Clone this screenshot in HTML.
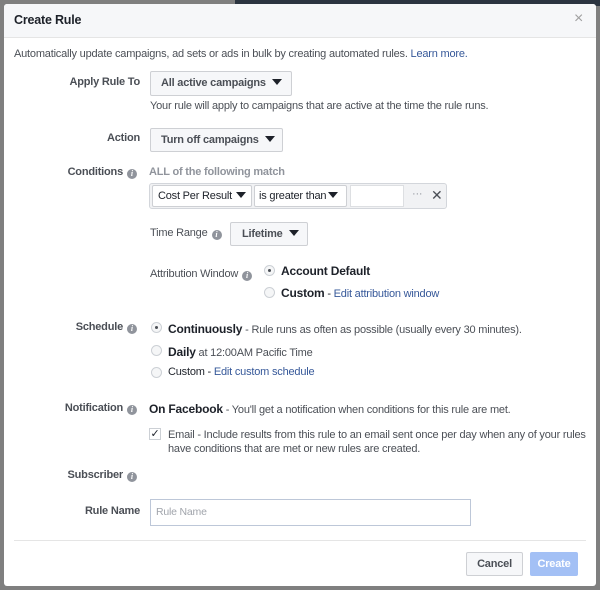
<!DOCTYPE html>
<html><head><style>
body{margin:0;width:600px;height:590px;position:relative;overflow:hidden;background:#7f7f7f;font-family:"Liberation Sans",Arial,sans-serif;font-size:11px;letter-spacing:-0.2px;color:#1d2129}
.a{position:absolute;white-space:nowrap}
.lbl{position:absolute;right:460px;color:#4b4f56;font-weight:bold;font-size:11px;white-space:nowrap}
.btn{position:absolute;white-space:nowrap;background:#f6f7f9;border:1px solid #ced0d4;border-radius:2px;box-sizing:border-box;font-weight:bold;color:#4b4f56;font-size:11px;line-height:22px;padding-left:10px}
.tri{display:inline-block;width:0;height:0;border-left:5px solid transparent;border-right:5px solid transparent;border-top:6px solid #1d2129;margin-left:6px;vertical-align:1px}
.i{display:inline-block;width:10px;height:10px;border-radius:50%;background:#90949c;color:#fff;font-size:8px;line-height:10px;text-align:center;font-weight:bold;font-style:italic;vertical-align:-1px;margin-left:4px;font-family:"Liberation Serif",serif;letter-spacing:0}
.rad{position:absolute;width:11px;height:11px;border-radius:50%;border:1px solid #ccd0d5;background:#f5f6f7;box-sizing:border-box}
.rad.on::after{content:"";position:absolute;left:3px;top:3px;width:3px;height:3px;border-radius:50%;background:#4b4f56}
.link{color:#365899}
.g{color:#4b4f56}
b{font-size:12px}
</style></head><body>
<div class="a" style="left:235px;top:0;width:365px;height:6px;background:#2b3440"></div>
<div class="a" style="left:4px;top:4px;width:592px;height:582px;background:#fff;border-radius:3px"></div>
<div class="a" style="left:4px;top:4px;width:592px;height:33px;background:#f6f7f9;border-bottom:1px solid #e5e5e5;border-radius:3px 3px 0 0"></div>
<div class="a" style="left:14px;top:13px;font-size:12.5px;font-weight:bold">Create Rule</div>
<div class="a" style="left:574px;top:10px;font-size:16px;color:#a0a0a0">×</div>
<div class="a" style="left:14px;top:48px;color:#4b4f56">Automatically update campaigns, ad sets or ads in bulk by creating automated rules. <span class="link">Learn more.</span></div>

<div class="lbl" style="top:76px">Apply Rule To</div>
<div class="btn" style="left:150px;top:71px;width:142px;height:25px">All active campaigns<span class="tri"></span></div>
<div class="a g" style="left:150px;top:100px">Your rule will apply to campaigns that are active at the time the rule runs.</div>

<div class="lbl" style="top:132px">Action</div>
<div class="btn" style="left:150px;top:128px;width:133px;height:24px">Turn off campaigns<span class="tri"></span></div>

<div class="lbl" style="top:166px;right:463px">Conditions<span class="i">i</span></div>
<div class="a" style="left:149px;top:166px;color:#90949c;font-weight:bold">ALL of the following match</div>
<div class="a" style="left:149px;top:183px;width:298px;height:26px;background:#f1f2f4;border:1px solid #d3d6db;border-radius:3px;box-sizing:border-box"></div>
<div class="btn" style="left:152px;top:185px;width:100px;height:22px;line-height:20px;padding-left:5px;background:#fff;font-weight:normal;color:#1d2129">Cost Per Result<span class="tri" style="margin-left:4px"></span></div>
<div class="btn" style="left:254px;top:185px;width:93px;height:22px;line-height:20px;padding-left:4px;background:#fff;font-weight:normal;color:#1d2129">is greater than<span class="tri" style="margin-left:2px"></span></div>
<div class="a" style="left:350px;top:185px;width:54px;height:22px;background:#fff;border:1px solid #dddfe2;box-sizing:border-box"></div>
<div class="a" style="left:412px;top:188px;color:#90949c">···</div>
<div class="a" style="left:431px;top:187px;font-size:14px;color:#4b4f56">✕</div>

<div class="a" style="left:150px;top:227px;color:#4b4f56">Time Range<span class="i">i</span></div>
<div class="btn" style="left:230px;top:222px;width:78px;height:24px;padding-left:11px">Lifetime<span class="tri"></span></div>

<div class="a" style="left:150px;top:268px;color:#4b4f56">Attribution Window<span class="i">i</span></div>
<div class="rad on" style="left:264px;top:265px"></div>
<div class="a" style="left:281px;top:264px"><b>Account Default</b></div>
<div class="rad" style="left:264px;top:287px"></div>
<div class="a" style="left:281px;top:286px"><b>Custom</b> - <span class="link">Edit attribution window</span></div>

<div class="lbl" style="top:321px;right:463px">Schedule<span class="i">i</span></div>
<div class="rad on" style="left:151px;top:322px"></div>
<div class="a" style="left:168px;top:322px"><b>Continuously</b> <span class="g">- Rule runs as often as possible (usually every 30 minutes).</span></div>
<div class="rad" style="left:151px;top:345px"></div>
<div class="a" style="left:168px;top:345px"><b>Daily</b> <span class="g">at 12:00AM Pacific Time</span></div>
<div class="rad" style="left:151px;top:367px"></div>
<div class="a" style="left:168px;top:366px">Custom - <span class="link">Edit custom schedule</span></div>

<div class="lbl" style="top:402px;right:463px">Notification<span class="i">i</span></div>
<div class="a" style="left:149px;top:402px"><b>On Facebook</b> <span class="g">- You'll get a notification when conditions for this rule are met.</span></div>
<div class="a" style="left:149px;top:428px;width:12px;height:12px;border:1px solid #ccd0d5;box-sizing:border-box;background:#fff;font-size:11px;line-height:10px;text-align:center">✓</div>
<div class="a g" style="left:168px;top:428px;line-height:14px">Email - Include results from this rule to an email sent once per day when any of your rules<br>have conditions that are met or new rules are created.</div>

<div class="lbl" style="top:469px;right:463px">Subscriber<span class="i">i</span></div>

<div class="lbl" style="top:505px">Rule Name</div>
<div class="a" style="left:150px;top:499px;width:321px;height:27px;border:1px solid #bdc7d8;box-sizing:border-box;color:#a0a4ab;font-size:10.5px;line-height:25px;padding-left:5px">Rule Name</div>

<div class="a" style="left:14px;top:540px;width:572px;height:1px;background:#e5e5e5"></div>
<div class="a" style="left:466px;top:552px;width:57px;height:24px;background:#f6f7f9;border:1px solid #ced0d4;border-radius:2px;box-sizing:border-box;text-align:center;line-height:22px;font-weight:bold;color:#4b4f56">Cancel</div>
<div class="a" style="left:530px;top:552px;width:48px;height:24px;border-radius:2px;text-align:center;line-height:24px;font-weight:bold;color:#fff;background:#a3c0f5">Create</div>
</body></html>
